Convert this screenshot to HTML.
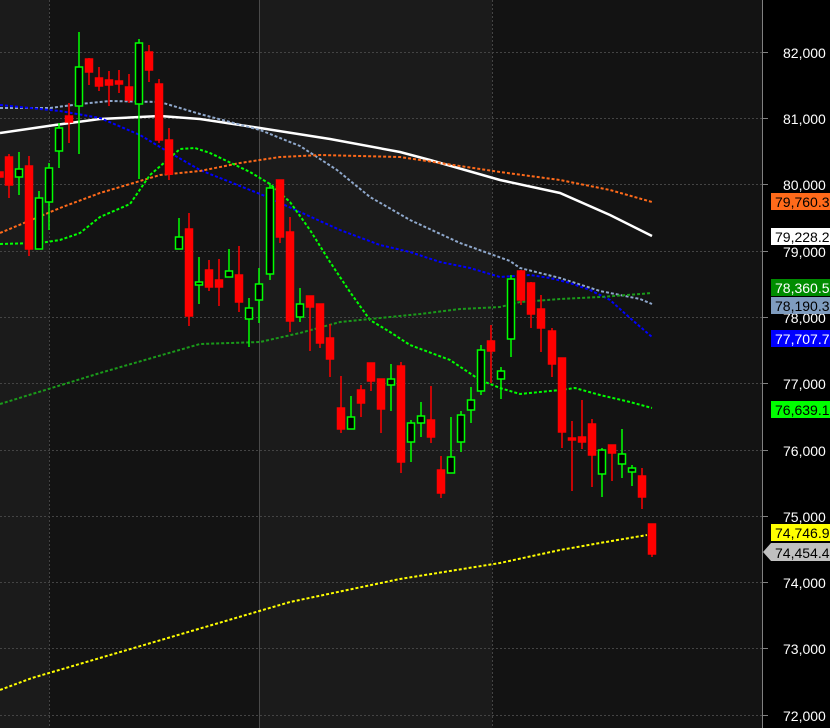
<!DOCTYPE html>
<html><head><meta charset="utf-8"><style>
html,body{margin:0;padding:0;background:#000;width:830px;height:728px;overflow:hidden}
svg{display:block}
text{font-family:"Liberation Sans",sans-serif;font-size:14px}
</style></head><body>
<svg width="830" height="728" viewBox="0 0 830 728" xmlns="http://www.w3.org/2000/svg">
<rect x="0" y="0" width="830" height="728" fill="#000"/>
<rect x="0" y="0" width="49" height="728" fill="#1b1b1b"/>
<rect x="49" y="0" width="210" height="728" fill="#131313"/>
<rect x="259" y="0" width="233" height="728" fill="#1b1b1b"/>
<rect x="492" y="0" width="270" height="728" fill="#131313"/>
<g stroke="#444" stroke-width="1" stroke-dasharray="2,2">
<line x1="0" y1="52.5" x2="762" y2="52.5"/><line x1="0" y1="118.5" x2="762" y2="118.5"/>
<line x1="0" y1="184.5" x2="762" y2="184.5"/><line x1="0" y1="251.5" x2="762" y2="251.5"/>
<line x1="0" y1="317.5" x2="762" y2="317.5"/><line x1="0" y1="383.5" x2="762" y2="383.5"/>
<line x1="0" y1="450.5" x2="762" y2="450.5"/><line x1="0" y1="516.5" x2="762" y2="516.5"/>
<line x1="0" y1="582.5" x2="762" y2="582.5"/><line x1="0" y1="648.5" x2="762" y2="648.5"/>
<line x1="0" y1="715.5" x2="762" y2="715.5"/>
<line x1="49.5" y1="0" x2="49.5" y2="728"/><line x1="492.5" y1="0" x2="492.5" y2="728"/>
</g>
<line x1="259.5" y1="0" x2="259.5" y2="728" stroke="#4a4a4a"/>
<line x1="762.5" y1="0" x2="762.5" y2="728" stroke="#808080"/>
<g stroke="#808080"><line x1="762" y1="52.5" x2="768" y2="52.5"/><line x1="762" y1="118.5" x2="768" y2="118.5"/><line x1="762" y1="184.5" x2="768" y2="184.5"/><line x1="762" y1="251.5" x2="768" y2="251.5"/><line x1="762" y1="317.5" x2="768" y2="317.5"/><line x1="762" y1="383.5" x2="768" y2="383.5"/><line x1="762" y1="450.5" x2="768" y2="450.5"/><line x1="762" y1="516.5" x2="768" y2="516.5"/><line x1="762" y1="582.5" x2="768" y2="582.5"/><line x1="762" y1="648.5" x2="768" y2="648.5"/><line x1="762" y1="715.5" x2="768" y2="715.5"/></g>

<!-- indicator lines -->
<g fill="none" stroke-width="2">
<polyline stroke="#fff" stroke-width="2.5" points="0,133 55,125 100,119 160,116 200,119 260,128 330,139 400,152 430,160 500,180 560,193 610,215 652,236"/>
<polyline stroke="#8fa8cc" stroke-dasharray="3,2" points="0,108 50,108 80,104 110,101 160,102 200,114 260,130 300,146 337,170 370,197 410,220 460,243 510,261 520,268 560,278 600,291 640,299 652,304"/>
<polyline stroke="#0000ff" stroke-dasharray="3,2" points="0,105 60,111 100,118 140,135 165,150 200,170 265,196 300,212 340,230 380,245 410,252 440,262 470,268 500,277 530,275 550,278 570,283 590,290 610,300 630,318 652,337"/>
<polyline stroke="#ff6a1a" stroke-dasharray="3,2" points="0,233 60,208 100,193 160,175 200,171 240,163 280,157 320,155 400,157 440,163 500,172 560,180 610,190 652,202"/>
<polyline stroke="#00ff00" stroke-dasharray="3,2" points="0,244 40,243 60,240 80,233 100,217 130,204 150,175 180,149 195,148 210,153 250,172 270,184 290,202 310,230 330,262 350,292 370,320 390,332 410,345 450,360 480,380 500,388 520,394 560,390 575,388 600,395 630,402 652,408"/>
<polyline stroke="#1a9a1a" stroke-dasharray="3,2" points="0,404 100,373 200,344 260,342 300,333 340,322 380,318 420,314 460,309 500,307 520,302 560,299 600,297 640,294 652,293"/>
<polyline stroke="#ffff00" stroke-dasharray="3,2" points="0,690 32,678 290,602 400,579 500,563 560,550 600,543 647,535"/>
</g>

<!-- candles -->
<g stroke-width="1.5">
<g stroke="#ff0000" fill="#ff0000">
<rect x="-3" y="172" width="6" height="5"/>
<line x1="9" y1="154" x2="9" y2="198"/><rect x="5.5" y="157" width="7" height="28"/>
<line x1="29" y1="156" x2="29" y2="256"/><rect x="25.5" y="166" width="7" height="83"/>
<line x1="69" y1="103" x2="69" y2="143"/><rect x="65.5" y="116" width="7" height="6"/>
<line x1="89" y1="58" x2="89" y2="85"/><rect x="85.5" y="59" width="7" height="13"/>
<line x1="99" y1="67" x2="99" y2="91"/><rect x="95.5" y="78" width="7" height="8"/>
<line x1="109" y1="71" x2="109" y2="106"/><rect x="105.5" y="80" width="7" height="5"/>
<line x1="119" y1="70" x2="119" y2="93"/><rect x="115.5" y="81" width="7" height="3"/>
<line x1="129" y1="74" x2="129" y2="103"/><rect x="125.5" y="87" width="7" height="13"/>
<line x1="149" y1="45" x2="149" y2="82"/><rect x="145.5" y="52" width="7" height="18"/>
<line x1="159" y1="79" x2="159" y2="143"/><rect x="155.5" y="84" width="7" height="56"/>
<line x1="169" y1="128" x2="169" y2="180"/><rect x="165.5" y="140" width="7" height="34"/>
<line x1="189" y1="213" x2="189" y2="326"/><rect x="185.5" y="229" width="7" height="87"/>
<line x1="209" y1="260" x2="209" y2="291"/><rect x="205.5" y="270" width="7" height="17"/>
<line x1="219" y1="259" x2="219" y2="306"/><rect x="215.5" y="280" width="7" height="7"/>
<line x1="239" y1="246" x2="239" y2="312"/><rect x="235.5" y="275" width="7" height="27"/>
<line x1="280" y1="180" x2="280" y2="243"/><rect x="276.5" y="180" width="7" height="57"/>
<line x1="290" y1="217" x2="290" y2="332"/><rect x="286.5" y="232" width="7" height="89"/>
<line x1="310" y1="296" x2="310" y2="351"/><rect x="306.5" y="296" width="7" height="11"/>
<line x1="320" y1="304" x2="320" y2="348"/><rect x="316.5" y="304" width="7" height="39"/>
<line x1="330" y1="324" x2="330" y2="377"/><rect x="326.5" y="338" width="7" height="21"/>
<line x1="341" y1="376" x2="341" y2="433"/><rect x="337.5" y="408" width="7" height="21"/>
<line x1="361" y1="385" x2="361" y2="417"/><rect x="357.5" y="390" width="7" height="13"/>
<line x1="371" y1="363" x2="371" y2="391"/><rect x="367.5" y="363" width="7" height="18"/>
<line x1="381" y1="379" x2="381" y2="433"/><rect x="377.5" y="379" width="7" height="30"/>
<line x1="401" y1="362" x2="401" y2="473"/><rect x="397.5" y="366" width="7" height="96"/>
<line x1="431" y1="386" x2="431" y2="443"/><rect x="427.5" y="420" width="7" height="17"/>
<line x1="441" y1="456" x2="441" y2="498"/><rect x="437.5" y="470" width="7" height="23"/>
<line x1="491" y1="325" x2="491" y2="383"/><rect x="487.5" y="341" width="7" height="10"/>
<line x1="521" y1="270" x2="521" y2="305"/><rect x="517.5" y="271" width="7" height="29"/>
<line x1="531" y1="282" x2="531" y2="328"/><rect x="527.5" y="283" width="7" height="31"/>
<line x1="541" y1="295" x2="541" y2="352"/><rect x="537.5" y="309" width="7" height="19"/>
<line x1="552" y1="328" x2="552" y2="377"/><rect x="548.5" y="331" width="7" height="33"/>
<line x1="562" y1="358" x2="562" y2="448"/><rect x="558.5" y="358" width="7" height="74"/>
<line x1="572" y1="421" x2="572" y2="491"/><rect x="568.5" y="438" width="7" height="2"/>
<line x1="582" y1="400" x2="582" y2="449"/><rect x="578.5" y="437" width="7" height="5"/>
<line x1="592" y1="419" x2="592" y2="487"/><rect x="588.5" y="424" width="7" height="31"/>
<line x1="612" y1="445" x2="612" y2="481"/><rect x="608.5" y="445" width="7" height="8"/>
<line x1="642" y1="468" x2="642" y2="509"/><rect x="638.5" y="476" width="7" height="21"/>
<line x1="652" y1="524" x2="652" y2="557"/><rect x="648.5" y="524" width="7" height="30"/>
</g>
<g stroke="#00ff00" fill="#000">
<line x1="19" y1="152" x2="19" y2="195"/><rect x="15.5" y="169" width="7" height="8"/>
<line x1="39" y1="191" x2="39" y2="249"/><rect x="35.5" y="198" width="7" height="51"/>
<line x1="49" y1="163" x2="49" y2="230"/><rect x="45.5" y="168" width="7" height="34"/>
<line x1="59" y1="123" x2="59" y2="168"/><rect x="55.5" y="128" width="7" height="23"/>
<line x1="79" y1="32" x2="79" y2="154"/><rect x="75.5" y="67" width="7" height="39"/>
<line x1="139" y1="39" x2="139" y2="179"/><rect x="135.5" y="43" width="7" height="61"/>
<line x1="179" y1="218" x2="179" y2="249"/><rect x="175.5" y="237" width="7" height="12"/>
<line x1="199" y1="257" x2="199" y2="304"/><rect x="195.5" y="282" width="7" height="3"/>
<line x1="229" y1="249" x2="229" y2="277"/><rect x="225.5" y="271" width="7" height="6"/>
<line x1="249" y1="298" x2="249" y2="347"/><rect x="245.5" y="308" width="7" height="11"/>
<line x1="259" y1="268" x2="259" y2="323"/><rect x="255.5" y="284" width="7" height="16"/>
<line x1="270" y1="183" x2="270" y2="280"/><rect x="266.5" y="188" width="7" height="86"/>
<line x1="300" y1="288" x2="300" y2="322"/><rect x="296.5" y="304" width="7" height="13"/>
<line x1="351" y1="396" x2="351" y2="429"/><rect x="347.5" y="417" width="7" height="12"/>
<line x1="391" y1="364" x2="391" y2="411"/><rect x="387.5" y="379" width="7" height="6"/>
<line x1="411" y1="420" x2="411" y2="462"/><rect x="407.5" y="423" width="7" height="19"/>
<line x1="421" y1="402" x2="421" y2="437"/><rect x="417.5" y="416" width="7" height="7"/>
<line x1="451" y1="417" x2="451" y2="473"/><rect x="447.5" y="457" width="7" height="16"/>
<line x1="461" y1="411" x2="461" y2="452"/><rect x="457.5" y="415" width="7" height="27"/>
<line x1="471" y1="387" x2="471" y2="423"/><rect x="467.5" y="400" width="7" height="10"/>
<line x1="481" y1="345" x2="481" y2="395"/><rect x="477.5" y="350" width="7" height="41"/>
<line x1="501" y1="367" x2="501" y2="399"/><rect x="497.5" y="371" width="7" height="8"/>
<line x1="511" y1="275" x2="511" y2="357"/><rect x="507.5" y="279" width="7" height="60"/>
<line x1="602" y1="448" x2="602" y2="497"/><rect x="598.5" y="450" width="7" height="24"/>
<line x1="622" y1="429" x2="622" y2="478"/><rect x="618.5" y="454" width="7" height="10"/>
<line x1="632" y1="465" x2="632" y2="486"/><rect x="628.5" y="468" width="7" height="4"/>
</g>
</g>

<!-- axis labels -->
<g fill="#fff" text-anchor="start">
<text x="783" y="58">82,000</text>
<text x="783" y="124">81,000</text>
<text x="783" y="190">80,000</text>
<text x="783" y="257">79,000</text>
<text x="783" y="323">78,000</text>
<text x="783" y="389">77,000</text>
<text x="783" y="456">76,000</text>
<text x="783" y="522">75,000</text>
<text x="783" y="588">74,000</text>
<text x="783" y="654">73,000</text>
<text x="783" y="721">72,000</text>
</g>
<rect x="771" y="193" width="59" height="17" fill="#ff6a1a"/><text x="775" y="207" fill="#000">79,760.3</text>
<rect x="771" y="228" width="59" height="17" fill="#fff"/><text x="775" y="242" fill="#000">79,228.2</text>
<rect x="771" y="279" width="59" height="17" fill="#008c00"/><text x="775" y="293" fill="#fff">78,360.5</text>
<rect x="771" y="297" width="59" height="17" fill="#7f9cbf"/><text x="775" y="311" fill="#000">78,190.3</text>
<rect x="771" y="330" width="59" height="17" fill="#0000ff"/><text x="775" y="344" fill="#fff">77,707.7</text>
<rect x="771" y="401" width="59" height="17" fill="#00ff00"/><text x="775" y="415" fill="#000">76,639.1</text>
<rect x="771" y="524" width="59" height="17" fill="#ffff00"/><text x="775" y="538" fill="#000">74,746.9</text>
<polygon points="763,552 771,543 830,543 830,561 771,561" fill="#c0c0c0"/><text x="775" y="558" fill="#000">74,454.4</text>
</svg>
</body></html>
